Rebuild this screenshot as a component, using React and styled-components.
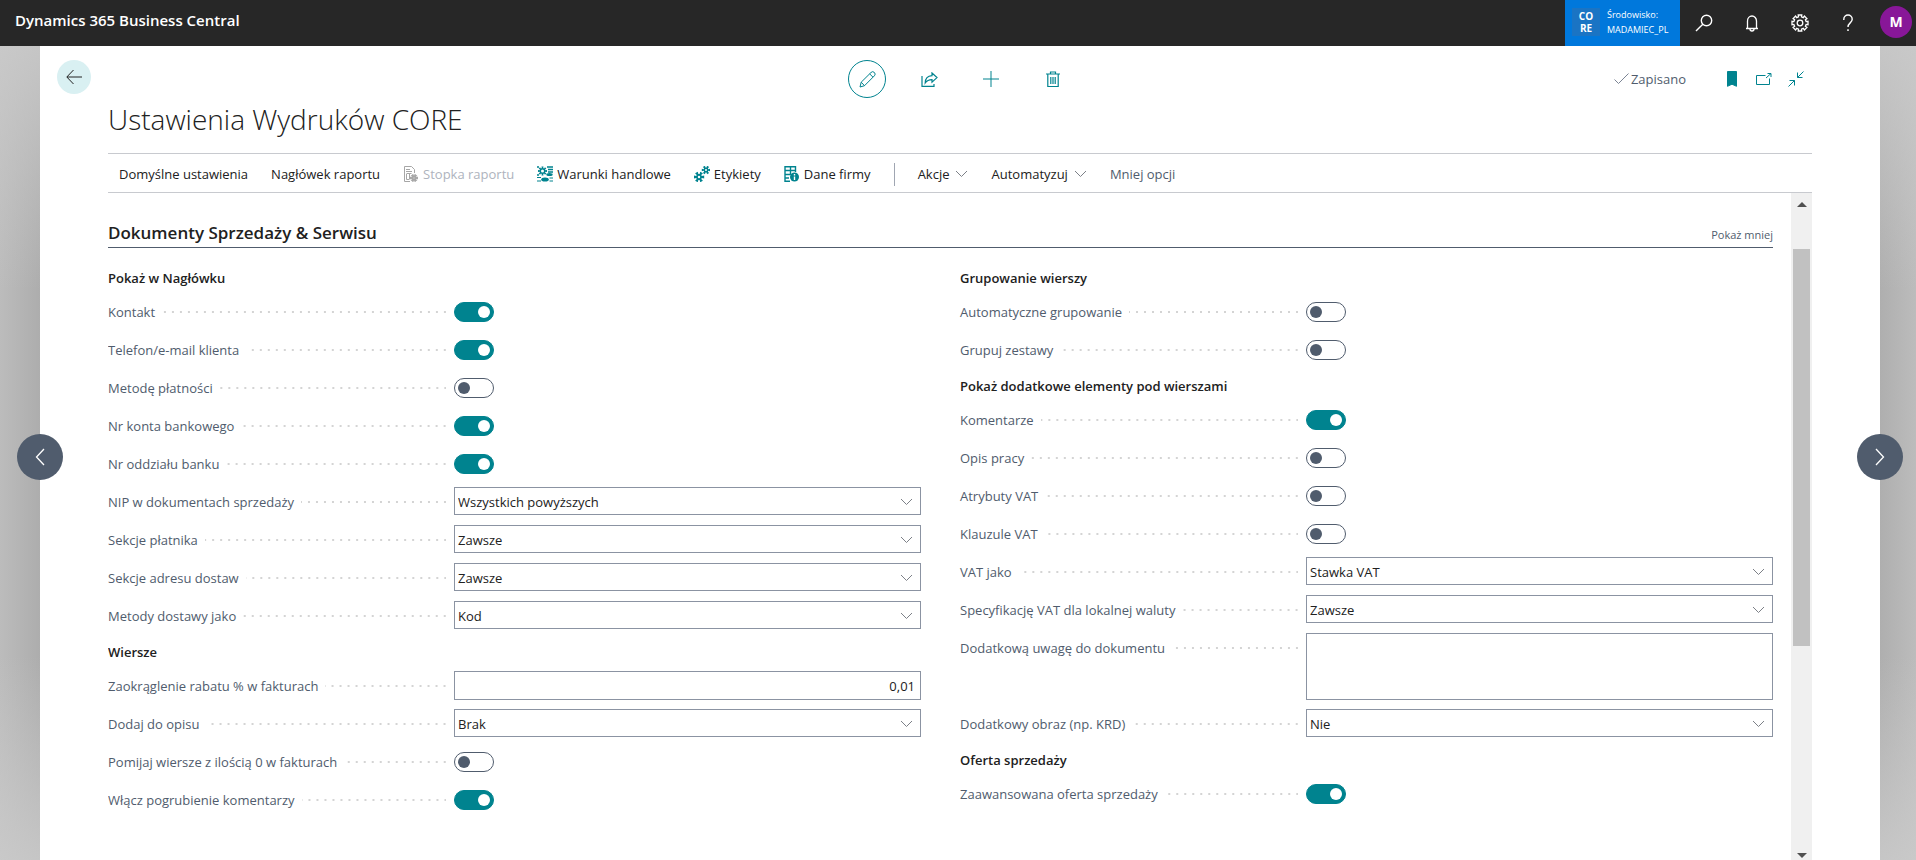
import { useState } from "react";
import styled, { createGlobalStyle } from "styled-components";

const GlobalStyle = createGlobalStyle`
  * {
    box-sizing: border-box;
  }
  body {
    margin: 0;
    height: 100vh;
    overflow: hidden;
    font-family: "Open Sans", "Noto Sans", sans-serif;
    font-size: 13px;
    line-height: 20px;
    color: #212121;
  }
  #root {
    height: 100%;
  }
  button,
  input,
  select,
  textarea {
    font: inherit;
    color: inherit;
  }
  button {
    padding: 0;
    border: 0;
    background: none;
    cursor: pointer;
  }
`;

const Page = styled.div`
  position: relative;
  height: 100%;
  display: flex;
  flex-direction: column;
`;

//header

const Header = styled.header`
  height: 46px;
  flex: none;
  display: flex;
  justify-content: space-between;
  background-color: #272727;
  color: white;
`;
const Product = styled.a`
  padding: 10px 15px;
  font-size: 15px;
  font-weight: 600;
  color: white;
  text-decoration: none;
`;
const HeaderRight = styled.div`
  display: flex;
  align-items: center;
  padding-right: 4px;
`;
const Environment = styled.div`
  height: 46px;
  width: 115px;
  padding: 0 7px 2px;
  display: flex;
  align-items: center;
  gap: 7px;
  background-color: #0078dc;
  font-size: 9px;
  line-height: 15px;
  white-space: nowrap;
`;
const EnvLogo = styled.span`
  width: 28px;
  height: 28px;
  padding: 2px 0;
  background-color: #1a74c4;
  font-size: 10px;
  font-weight: 700;
  line-height: 12px;
  text-align: center;
`;
const HeaderButton = styled.button`
  width: 48px;
  height: 44px;
  display: flex;
  align-items: center;
  justify-content: center;
`;
const Avatar = styled.button`
  width: 32px;
  height: 32px;
  margin-left: 8px;
  margin-bottom: 2px;
  border-radius: 50%;
  background-color: #881798;
  font-size: 14px;
  font-weight: 700;
`;

//page

const Backdrop = styled.div`
  flex: 1;
  min-height: 0;
  display: flex;
  padding: 0 36px 0 40px;
  background: linear-gradient(
      rgba(204, 204, 204, 0.8),
      rgba(204, 204, 204, 0) 30%,
      rgba(204, 204, 204, 0) 75%,
      rgba(204, 204, 204, 0.8)
    ),
    linear-gradient(90deg, #bcbcbc, #adadad 40px, #adadad calc(100% - 40px), #bcbcbc);
`;
const Sheet = styled.main`
  flex: 1;
  min-width: 0;
  display: flex;
  flex-direction: column;
  padding: 0 68px;
  background-color: white;
`;
const TopBar = styled.div`
  height: 66px;
  flex: none;
  margin: 0 -68px;
  padding: 0 17px;
  display: grid;
  grid-template-columns: 1fr auto 1fr;
  align-items: center;
`;
const BackButton = styled.button`
  width: 34px;
  height: 34px;
  margin-bottom: 4px;
  display: flex;
  align-items: center;
  justify-content: center;
  border-radius: 50%;
  background-color: #d9f0f2;
`;
const Tools = styled.div`
  display: flex;
  align-items: center;
  gap: 24px;
`;
const Tool = styled.button`
  width: 38px;
  height: 38px;
  display: flex;
  align-items: center;
  justify-content: center;
  border: 1px solid ${(p) => (p.$active ? "#00838f" : "transparent")};
  border-radius: 50%;
`;
const TopRight = styled.div`
  display: flex;
  align-items: center;
  justify-content: flex-end;
  gap: 16px;
  padding-right: 59px;
`;
const Saved = styled.span`
  display: flex;
  align-items: center;
  gap: 2px;
  margin-right: 22px;
  color: #505c6d;
`;
const IconButton = styled.button`
  display: flex;
  width: 16px;
  height: 16px;
`;
const Title = styled.h1`
  flex: none;
  margin: -6px 0 21px;
  font-size: 28px;
  line-height: 26px;
  font-weight: 300;
`;
const ActionBar = styled.nav`
  flex: none;
  height: 40px;
  padding: 2px 11px 0;
  display: flex;
  align-items: center;
  gap: 23px;
  border-top: 1px solid #c8cacf;
  border-bottom: 1px solid #c8cacf;
`;
const Action = styled.button`
  display: flex;
  align-items: center;
  gap: ${(p) => (p.$menu ? 6 : 4)}px;
  white-space: nowrap;
  color: ${(p) => (p.$muted ? "#505c6d" : "#212121")};
  &:disabled {
    color: #aeb3bd;
    cursor: default;
  }
`;
const Divider = styled.span`
  width: 1px;
  height: 23px;
  background-color: #a0a6b2;
`;

//scroll area

const ScrollRow = styled.div`
  flex: 1;
  min-height: 0;
  display: flex;
`;
const Content = styled.div`
  flex: 1;
  min-width: 0;
  overflow: hidden;
  padding: 26px 18px 0 0;
`;
const ScrollBar = styled.div`
  width: 21px;
  flex: none;
  display: flex;
  flex-direction: column;
  align-items: center;
  background-color: #f0f0f0;
`;
const ScrollButton = styled.button`
  width: 21px;
  height: ${(p) => (p.$down ? 10 : 22)}px;
  display: flex;
  align-items: center;
  justify-content: center;
`;
const ScrollTrack = styled.div`
  flex: 1;
  width: 17px;
  padding-top: 34px;
`;
const ScrollThumb = styled.div`
  height: 66%;
  background-color: #c1c1c1;
`;
const SectionHead = styled.div`
  height: 29px;
  display: flex;
  justify-content: space-between;
  border-bottom: 1px solid #505c6d;
`;
const SectionTitle = styled.h2`
  margin: 0;
  font-size: 17px;
  line-height: 28px;
  font-weight: 600;
`;
const ShowLess = styled.button`
  align-self: flex-end;
  font-size: 11px;
  line-height: 24px;
  color: #505c6d;
`;
const Columns = styled.div`
  display: grid;
  grid-template-columns: 1fr 1fr;
  gap: 39px;
  padding-top: 13px;
`;
const GroupTitle = styled.h3`
  height: 32px;
  margin: 0;
  padding-top: 7px;
  font-size: 13px;
  line-height: 20px;
  font-weight: 600;
`;
const Row = styled.div`
  height: ${(p) => (p.$tall ? 76 : 38)}px;
  padding-top: 4px;
  display: flex;
  align-items: flex-start;
`;
const LabelCell = styled.div`
  flex: none;
  width: 346px;
  padding: 5px 8px 0 0;
  display: flex;
  align-items: center;
  color: #505c6d;
`;
const Label = styled.label`
  white-space: nowrap;
`;
const Dots = styled.span`
  flex: 1;
  height: 2px;
  margin-left: 7px;
  background: linear-gradient(90deg, transparent 6px, #d4d4d4 6px) right / 8px 2px;
`;
const Toggle = styled.input`
  appearance: none;
  width: 40px;
  height: 20px;
  margin: 5px 0 0;
  padding: 3px;
  display: flex;
  border: 1px solid #505c6d;
  border-radius: 10px;
  cursor: pointer;
  &::before {
    content: "";
    width: 12px;
    height: 12px;
    border-radius: 50%;
    background-color: #505c6d;
  }
  &:checked {
    justify-content: flex-end;
    border-color: #00838f;
    background-color: #00838f;
  }
  &:checked::before {
    background-color: white;
  }
`;
const SelectBox = styled.div`
  flex: 1;
  height: 28px;
  display: grid;
  align-items: center;
  border: 1px solid #8b93a2;
  > * {
    grid-area: 1 / 1;
  }
  svg {
    justify-self: end;
    margin-top: 2px;
    margin-right: 7px;
    pointer-events: none;
  }
`;
const Select = styled.select`
  appearance: none;
  width: 100%;
  height: 26px;
  padding: 2px 24px 0 3px;
  border: 0;
  background: none;
`;
const TextInput = styled.input`
  flex: 1;
  min-width: 0;
  height: 29px;
  padding: 0 5px;
  border: 1px solid #8b93a2;
  text-align: right;
`;
const TextArea = styled.textarea`
  flex: 1;
  height: 67px;
  padding: 4px;
  border: 1px solid #8b93a2;
  resize: none;
`;

//previous and next record, over the edge of the sheet
const RecordButton = styled.button`
  position: absolute;
  top: 434px;
  ${(p) => (p.$next ? "right: 13px;" : "left: 17px;")}
  width: 46px;
  height: 46px;
  display: flex;
  align-items: center;
  justify-content: center;
  border-radius: 50%;
  background-color: #505c6d;
`;

//icons

const Icon = ({ w = 16, h = 16, color = "#00838f", children }) => (
  <svg width={w} height={h} viewBox={`0 0 ${w} ${h}`} fill="none" stroke={color} aria-hidden="true">
    {children}
  </svg>
);

const Chevron = () => (
  <Icon w={13} h={8} color="#7c8087">
    <path d="M1 1l5.500 5.500L12 1" />
  </Icon>
);

const SearchIcon = () => (
  <Icon w={18} h={18} color="white">
    <circle cx="11.5" cy="6.5" r="5.2" strokeWidth="1.4" />
    <path d="M7.8 10.2L1 17" strokeWidth="1.4" />
  </Icon>
);

const BellIcon = () => (
  <Icon w={16} h={18} color="white">
    <path d="M2 14.5h12M3.5 14.5V7a4.500 5 0 0 1 9 0v7.500" strokeWidth="1.3" />
    <path d="M6 15a2 2 0 0 0 4 0" strokeWidth="1.3" />
  </Icon>
);

//outline of a cog, teeth spaced evenly round its centre
const cog = (cx, cy, outer, inner, teeth) => {
  const pts = [];
  for (let i = 0; i < teeth; i++) {
    const a = (i * 2 * Math.PI) / teeth;
    const step = Math.PI / teeth;
    [
      [-0.55, outer],
      [0.55, outer],
      [0.6, inner],
      [1.4, inner],
    ].forEach(([k, r]) => {
      pts.push(`${(cx + r * Math.cos(a + k * step)).toFixed(2)},${(cy + r * Math.sin(a + k * step)).toFixed(2)}`);
    });
  }
  return pts.join(" ");
};

const GearIcon = () => (
  <Icon w={18} h={18} color="white">
    <polygon points={cog(9, 9, 8.2, 6.3, 8)} strokeWidth="1.3" />
    <circle cx="9" cy="9" r="2.8" strokeWidth="1.3" />
  </Icon>
);

const HelpIcon = () => (
  <Icon w={12} h={18} color="white">
    <path d="M1.8 6V5.2a4.200 4.200 0 0 1 8.400 0c0 3.600-4.200 3.800-4.200 7.800" strokeWidth="1.4" />
    <path d="M6 15.2v1.800" strokeWidth="1.5" />
  </Icon>
);

const BackIcon = () => (
  <Icon w={16} h={16} color="#222">
    <path d="M16 8H1M7.500 1L.8 8l6.700 7" />
  </Icon>
);

const PencilIcon = () => (
  <Icon w={17} h={17}>
    <path d="M1 16l1.200-4.800L12 1.500a2.100 2.100 0 0 1 3.400 3.300L5.500 14.700zM2.200 11.200l3.300 3.500M10.700 2.900l3.300 3.300" />
  </Icon>
);

const ShareIcon = () => (
  <Icon w={17} h={15}>
    <path d="M1 4v10.300h12V12" strokeWidth="1.2" />
    <path d="M11 1l5 4.600-5 4.600V7.700c-3 0-5 .7-6.800 3.300C4.300 6.500 7 3.800 11 3.600z" strokeWidth="1.2" />
  </Icon>
);

const PlusIcon = () => (
  <Icon>
    <path d="M8 0v16M0 8h16" />
  </Icon>
);

const TrashIcon = () => (
  <Icon w={14} h={17}>
    <path d="M0 3h14M4.500 3V1h5v2M1.800 3v12.500h10.400V3M4.800 6v7M7 6v7M9.200 6v7" strokeWidth="1.2" />
  </Icon>
);

const CheckIcon = () => (
  <Icon w={15} h={12} color="#7b8494">
    <path d="M.5 6.500l4 4L14.500.5" />
  </Icon>
);

const BookmarkIcon = () => (
  <Icon>
    <path d="M3.500.5h9v14.800L8 13.200l-4.500 2.100z" fill="#00838f" />
  </Icon>
);

const PopOutIcon = () => (
  <Icon>
    <path d="M9.500 4.500h-9v9h13V7.500M10 7l5-4.500M11.500 2.500H15V6" />
  </Icon>
);

const CollapseIcon = () => (
  <Icon>
    <path d="M15.500.5L9.500 6.500M9.500 1.500v5h5M.5 15.500l6-6M1.500 9.500h5v5" />
  </Icon>
);

const ReportIcon = () => (
  <Icon color="#a6a6a6">
    <path d="M7 15.500H1.500V.5h7l3 3V7M3 3.500h4M3 5.500h6M3.500 8v5.500H6M3.500 7.500h5M6.500 7.500v6" />
    <polygon points={cog(11, 12, 3.6, 2.4, 6)} fill="#a6a6a6" />
    <circle cx="11" cy="12" r="1" fill="white" />
  </Icon>
);

const TermsIcon = () => (
  <Icon>
    <path d="M0 1h2M0 9h2M10 1h6M11 3.500h5M11 6h5" strokeWidth="1.5" />
    <polygon points={cog(5.5, 5, 4.6, 3, 8)} fill="#00838f" stroke="none" />
    <circle cx="5.5" cy="5" r="1.5" fill="white" stroke="none" />
    <ellipse cx="12.5" cy="8.5" rx="3.2" ry="1.5" fill="#00838f" stroke="none" />
    <ellipse cx="8" cy="13.5" rx="3.8" ry="2" fill="#00838f" stroke="none" />
    <path d="M0 11.500h4M0 15h4M12.500 12h3.500M12.500 15h3.500" />
  </Icon>
);

const LabelsIcon = () => (
  <Icon>
    <polygon points={cog(5, 11, 5.4, 3, 6)} fill="#00838f" stroke="none" />
    <circle cx="5" cy="11" r="1.2" fill="white" stroke="none" />
    <polygon points={cog(12, 4, 4.4, 2.5, 6)} fill="#00838f" stroke="none" />
    <circle cx="12" cy="4" r="1" fill="white" stroke="none" />
  </Icon>
);

const CompanyIcon = () => (
  <Icon>
    <path d="M1 .7h10.500V6M1 4.500h10.500M1 8.500h5M1 12h4M1 15.300h5M1 0v16M6.500 1v8" strokeWidth="1.4" />
    <circle cx="10.5" cy="11" r="4.5" fill="#00838f" stroke="none" />
    <path d="M10.500 10.500v3.500M10.500 8v1.400" stroke="white" strokeWidth="1.4" />
  </Icon>
);

const actions = [
  { name: "Domyślne ustawienia" },
  { name: "Nagłówek raportu" },
  { name: "Stopka raportu", icon: <ReportIcon />, disabled: true },
  { name: "Warunki handlowe", icon: <TermsIcon /> },
  { name: "Etykiety", icon: <LabelsIcon /> },
  { name: "Dane firmy", icon: <CompanyIcon /> },
];

const columns = [
  [
    {
      title: "Pokaż w Nagłówku",
      fields: [
        { id: "kontakt", label: "Kontakt", type: "toggle", value: true },
        { id: "telefon", label: "Telefon/e-mail klienta", type: "toggle", value: true },
        { id: "platnosc", label: "Metodę płatności", type: "toggle", value: false },
        { id: "konto", label: "Nr konta bankowego", type: "toggle", value: true },
        { id: "oddzial", label: "Nr oddziału banku", type: "toggle", value: true },
        { id: "nip", label: "NIP w dokumentach sprzedaży", type: "select", value: "Wszystkich powyższych" },
        { id: "platnik", label: "Sekcje płatnika", type: "select", value: "Zawsze" },
        { id: "adres", label: "Sekcje adresu dostaw", type: "select", value: "Zawsze" },
        { id: "dostawa", label: "Metody dostawy jako", type: "select", value: "Kod" },
      ],
    },
    {
      title: "Wiersze",
      fields: [
        { id: "rabat", label: "Zaokrąglenie rabatu % w fakturach", type: "text", value: "0,01" },
        { id: "opis", label: "Dodaj do opisu", type: "select", value: "Brak" },
        { id: "pomijaj", label: "Pomijaj wiersze z ilością 0 w fakturach", type: "toggle", value: false },
        { id: "pogrubienie", label: "Włącz pogrubienie komentarzy", type: "toggle", value: true },
      ],
    },
  ],
  [
    {
      title: "Grupowanie wierszy",
      fields: [
        { id: "autoGrupy", label: "Automatyczne grupowanie", type: "toggle", value: false },
        { id: "zestawy", label: "Grupuj zestawy", type: "toggle", value: false },
      ],
    },
    {
      title: "Pokaż dodatkowe elementy pod wierszami",
      fields: [
        { id: "komentarze", label: "Komentarze", type: "toggle", value: true },
        { id: "opisPracy", label: "Opis pracy", type: "toggle", value: false },
        { id: "atrybuty", label: "Atrybuty VAT", type: "toggle", value: false },
        { id: "klauzule", label: "Klauzule VAT", type: "toggle", value: false },
        { id: "vatJako", label: "VAT jako", type: "select", value: "Stawka VAT" },
        { id: "specyfikacja", label: "Specyfikację VAT dla lokalnej waluty", type: "select", value: "Zawsze" },
        { id: "uwaga", label: "Dodatkową uwagę do dokumentu", type: "area", value: "" },
        { id: "obraz", label: "Dodatkowy obraz (np. KRD)", type: "select", value: "Nie" },
      ],
    },
    {
      title: "Oferta sprzedaży",
      fields: [{ id: "oferta", label: "Zaawansowana oferta sprzedaży", type: "toggle", value: true }],
    },
  ],
];

const Field = ({ field }) => {
  const { id, label, type } = field;
  const [value, setValue] = useState(field.value);
  const onChange = (e) => setValue(e.target.value);

  return (
    <Row $tall={type === "area"}>
      <LabelCell>
        <Label htmlFor={id}>{label}</Label>
        <Dots />
      </LabelCell>
      {type === "toggle" && (
        <Toggle id={id} type="checkbox" role="switch" checked={value} onChange={(e) => setValue(e.target.checked)} />
      )}
      {type === "select" && (
        <SelectBox>
          <Select id={id} value={value} onChange={onChange}>
            <option>{field.value}</option>
          </Select>
          <Chevron />
        </SelectBox>
      )}
      {type === "text" && <TextInput id={id} value={value} onChange={onChange} />}
      {type === "area" && <TextArea id={id} value={value} onChange={onChange} />}
    </Row>
  );
};

const App = () => {
  return (
    <Page>
      <GlobalStyle />
      <Header>
        <Product href="#">Dynamics 365 Business Central</Product>
        <HeaderRight>
          <Environment>
            <EnvLogo>
              CO
              <br />
              RE
            </EnvLogo>
            <span>
              Środowisko:
              <br />
              MADAMIEC_PL
            </span>
          </Environment>
          <HeaderButton aria-label="Szukaj">
            <SearchIcon />
          </HeaderButton>
          <HeaderButton aria-label="Powiadomienia">
            <BellIcon />
          </HeaderButton>
          <HeaderButton aria-label="Ustawienia">
            <GearIcon />
          </HeaderButton>
          <HeaderButton aria-label="Pomoc">
            <HelpIcon />
          </HeaderButton>
          <Avatar>M</Avatar>
        </HeaderRight>
      </Header>

      <Backdrop>
        <Sheet>
          <TopBar>
            <BackButton aria-label="Wstecz">
              <BackIcon />
            </BackButton>
            <Tools>
              <Tool $active aria-label="Edytuj">
                <PencilIcon />
              </Tool>
              <Tool aria-label="Udostępnij">
                <ShareIcon />
              </Tool>
              <Tool aria-label="Nowy">
                <PlusIcon />
              </Tool>
              <Tool aria-label="Usuń">
                <TrashIcon />
              </Tool>
            </Tools>
            <TopRight>
              <Saved>
                <CheckIcon />
                Zapisano
              </Saved>
              <IconButton aria-label="Zakładka">
                <BookmarkIcon />
              </IconButton>
              <IconButton aria-label="Otwórz w nowym oknie">
                <PopOutIcon />
              </IconButton>
              <IconButton aria-label="Zwiń">
                <CollapseIcon />
              </IconButton>
            </TopRight>
          </TopBar>
          <Title>Ustawienia Wydruków CORE</Title>

          <ActionBar>
            {actions.map((action) => (
              <Action key={action.name} disabled={action.disabled}>
                {action.icon}
                {action.name}
              </Action>
            ))}
            <Divider />
            <Action $menu>
              Akcje
              <Chevron />
            </Action>
            <Action $menu>
              Automatyzuj
              <Chevron />
            </Action>
            <Action $muted>Mniej opcji</Action>
          </ActionBar>

          <ScrollRow>
            <Content>
              <SectionHead>
                <SectionTitle>Dokumenty Sprzedaży &amp; Serwisu</SectionTitle>
                <ShowLess>Pokaż mniej</ShowLess>
              </SectionHead>
              <Columns>
                {columns.map((groups, i) => (
                  <div key={i}>
                    {groups.map((group) => (
                      <section key={group.title}>
                        <GroupTitle>{group.title}</GroupTitle>
                        {group.fields.map((field) => (
                          <Field key={field.id} field={field} />
                        ))}
                      </section>
                    ))}
                  </div>
                ))}
              </Columns>
            </Content>
            <ScrollBar>
              <ScrollButton aria-label="W górę">
                <Icon w={10} h={5}>
                  <path d="M0 5l5-5 5 5z" fill="#505050" stroke="none" />
                </Icon>
              </ScrollButton>
              <ScrollTrack>
                <ScrollThumb />
              </ScrollTrack>
              <ScrollButton $down aria-label="W dół">
                <Icon w={10} h={5}>
                  <path d="M0 0l5 5 5-5z" fill="#505050" stroke="none" />
                </Icon>
              </ScrollButton>
            </ScrollBar>
          </ScrollRow>
        </Sheet>
      </Backdrop>

      <RecordButton aria-label="Poprzedni">
        <Icon w={10} h={18} color="white">
          <path d="M9 1L1.500 9 9 17" strokeWidth="1.3" />
        </Icon>
      </RecordButton>
      <RecordButton $next aria-label="Następny">
        <Icon w={10} h={18} color="white">
          <path d="M1 1l7.500 8L1 17" strokeWidth="1.3" />
        </Icon>
      </RecordButton>
    </Page>
  );
};

export default App;
